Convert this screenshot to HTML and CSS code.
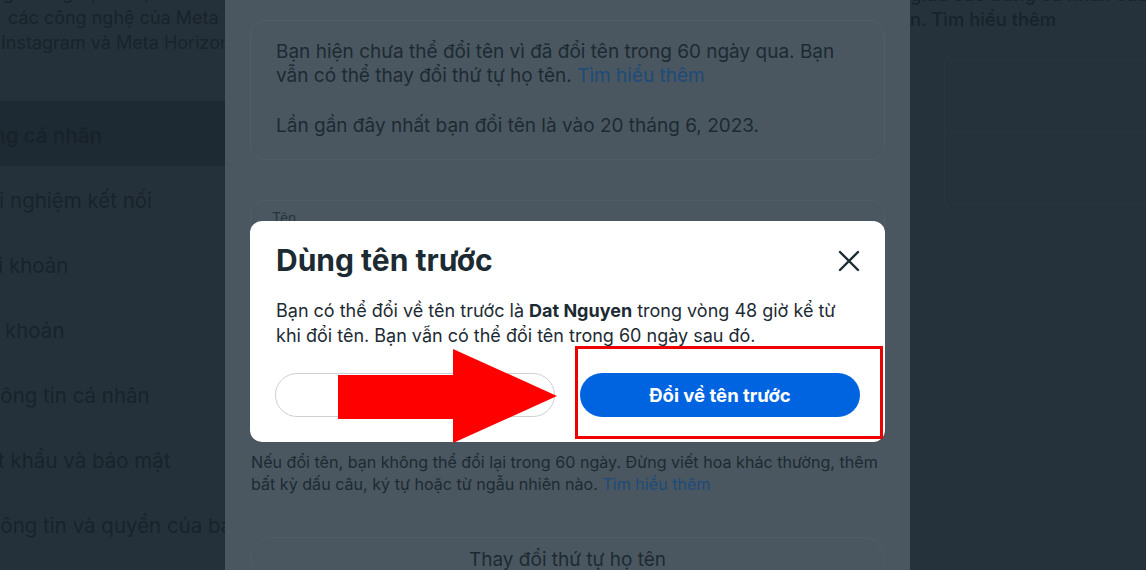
FILE: index.html
```html
<!DOCTYPE html>
<html lang="vi">
<head>
<meta charset="utf-8">
<title>Dùng tên trước</title>
<link rel="stylesheet" href="styles.css">
</head>
<body>
<div class="layout">
  <aside class="sidebar">
    <div class="side-intro">
      <p>những trải nghiệm được kết nối trên các</p>
      <p>các công nghệ của Meta</p>
      <p>Instagram và Meta Horizon</p>
    </div>
    <nav class="side-nav">
      <div class="side-item active"><span class="cut c30">Trang cá nhân</span></div>
      <div class="side-item"><span class="cut c28">Trải nghiệm kết nối</span></div>
      <div class="side-item"><span class="cut c20">Tài khoản</span></div>
      <div class="side-item"><span class="cut c8">khoản</span></div>
      <div class="side-item"><span class="cut c20">Thông tin cá nhân</span></div>
      <div class="side-item"><span class="cut c26">Mật khẩu và bảo mật</span></div>
      <div class="side-item"><span class="cut c20">Thông tin và quyền của bạn</span></div>
    </nav>
  </aside>

  <main class="main">
    <section class="info-box">
      <p>Bạn hiện chưa thể đổi tên vì đã đổi tên trong 60 ngày qua. Bạn vẫn có thể thay đổi thứ tự họ tên. <span class="link">Tìm hiểu thêm</span></p>
      <p class="gap">Lần gần đây nhất bạn đổi tên là vào 20 tháng 6, 2023.</p>
    </section>
    <section class="field-box">
      <span class="field-label">Tên</span>
    </section>
    <p class="hint">Nếu đổi tên, bạn không thể đổi lại trong 60 ngày. Đừng viết hoa khác thường, thêm bất kỳ dấu câu, ký tự hoặc từ ngẫu nhiên nào. <span class="link">Tìm hiểu thêm</span></p>
    <div class="order-btn">Thay đổi thứ tự họ tên</div>
  </main>

  <aside class="right">
    <div class="right-text">
      <p>giữa các trang cá nhân của bạn trên các</p>
      <p>n. Tìm hiểu thêm</p>
    </div>
    <div class="right-box">
      <div class="right-row"></div>
      <div class="right-row"></div>
    </div>
  </aside>
</div>

<div class="modal" role="dialog">
  <div class="modal-head">
    <h2 class="modal-title">Dùng tên trước</h2>
    <svg class="close" width="24" height="24" viewBox="0 0 24 24" aria-label="Đóng">
      <path d="M3 3 L21 21 M21 3 L3 21" stroke="#1c2b33" stroke-width="2.4" stroke-linecap="round" fill="none"/>
    </svg>
  </div>
  <p class="modal-body">Bạn có thể đổi về tên trước là <b>Dat Nguyen</b> trong vòng 48 giờ kể từ khi đổi tên. Bạn vẫn có thể đổi tên trong 60 ngày sau đó.</p>
  <div class="modal-actions">
    <button class="btn btn-ghost"></button>
    <button class="btn btn-primary">Đổi về tên trước</button>
  </div>
</div>

<svg class="arrow" width="222" height="96" viewBox="0 0 222 96" aria-hidden="true">
  <polygon points="0,26 115,26 115,0 219,47 115,94 115,70 0,70" fill="#ff0000"/>
</svg>
<div class="highlight"></div>
</body>
</html>
```

FILE: styles.css
```css
* { box-sizing: border-box; }
html, body { margin: 0; padding: 0; }
body {
  width: 1146px;
  height: 570px;
  overflow: hidden;
  position: relative;
  font-family: Inter, Roboto, "Noto Sans", sans-serif;
  color: #1c2b33;
}
p { margin: 0; }

.layout {
  display: grid;
  grid-template-columns: 225px 685px 1fr;
  height: 570px;
}

/* left sidebar (dimmed) */
.sidebar {
  background: #24313a;
  overflow: hidden;
  color: #18232b;
  font-size: 20.5px;
  white-space: nowrap;
}
.side-intro {
  margin-top: -20px;
  line-height: 25px;
  height: 121px;
  font-size: 18px;
}
.side-intro p:nth-child(1) { margin-left: -40px; }
.side-intro p:nth-child(2) { margin-left: 8px; }
.side-intro p:nth-child(3) { margin-left: 1px; }
.side-item {
  height: 65px;
  display: flex;
  align-items: center;
  padding-top: 4px;
}
.side-item.active {
  background: #1e2a33;
  font-weight: 600;
  color: #17222a;
}
.cut { display: block; }
.c30 { margin-left: -39px; }
.c28 { margin-left: -32px; }
.c20 { margin-left: -25px; }
.c26 { margin-left: -32px; }
.c8 { margin-left: 5px; }

/* middle panel (dimmed dialog) */
.main {
  background: #4a5760;
  padding: 20px 25px 0;
  overflow: hidden;
  color: #1d2a32;
}
.info-box {
  height: 140px;
  border: 1px solid #505d66;
  border-radius: 14px;
  padding: 19px 30px 19px 25px;
  font-size: 19px;
  line-height: 24px;
}
.info-box .gap { margin-top: 26px; }
.link { color: #1d4b7a; }
.field-box {
  margin-top: 40px;
  height: 240px;
  border: 1px solid #505d66;
  border-radius: 14px;
  padding: 8px 21px;
  font-size: 14px;
}
.field-label { color: #27343c; }
.hint {
  margin-top: 11px;
  font-size: 16.1px;
  line-height: 22px;
  padding-left: 1px;
}
.order-btn {
  margin-top: 42px;
  height: 44px;
  border: 1px solid #505d66;
  border-radius: 22px;
  display: flex;
  align-items: center;
  justify-content: center;
  font-size: 19px;
  padding-top: 1px;
}

/* right panel (dimmed) */
.right {
  background: #25323c;
  overflow: hidden;
  color: #17222a;
  white-space: nowrap;
  font-size: 18.4px;
  font-weight: 500;
}
.right-text {
  margin-top: -18px;
  line-height: 25px;
}
.right-box {
  margin: 27px 0 0 34px;
  height: 145px;
  border: 1px solid #28353f;
  border-right: none;
  display: flex;
  flex-direction: column;
}
.right-row { flex: 1; }
.right-row + .right-row { border-top: 1px solid #28353f; }

/* modal */
.modal {
  position: absolute;
  left: 250px;
  top: 221px;
  width: 635px;
  height: 221px;
  background: #ffffff;
  border-radius: 12px;
  padding: 22px 25px 25px 26px;
  display: flex;
  flex-direction: column;
}
.modal-head {
  display: flex;
  align-items: center;
  justify-content: space-between;
  height: 34px;
}
.modal-title {
  margin: 0;
  font-size: 30px;
  line-height: 34px;
  font-weight: 700;
  color: #1c2b33;
}
.close { margin-right: -1px; margin-top: 2px; }
.modal-body {
  margin-top: 21px;
  font-size: 18px;
  line-height: 25px;
  color: #1c2b33;
}
.modal-body b { font-weight: 700; }
.modal-actions {
  margin-top: auto;
  display: grid;
  grid-template-columns: 1fr 1fr;
  gap: 25px;
  margin-left: -1px;
}
.btn {
  height: 44px;
  border-radius: 22px;
  font-family: Inter, Roboto, "Noto Sans", sans-serif;
  font-size: 18.5px;
  font-weight: 700;
  cursor: pointer;
}
.btn-ghost {
  background: #ffffff;
  border: 1px solid #ced0d4;
}
.btn-primary {
  background: #0064e0;
  border: none;
  color: #ffffff;
}

/* annotation overlays */
.arrow {
  position: absolute;
  left: 338px;
  top: 349px;
}
.highlight {
  position: absolute;
  left: 575px;
  top: 346px;
  width: 308px;
  height: 93px;
  border: 3px solid #ee0000;
}
```
